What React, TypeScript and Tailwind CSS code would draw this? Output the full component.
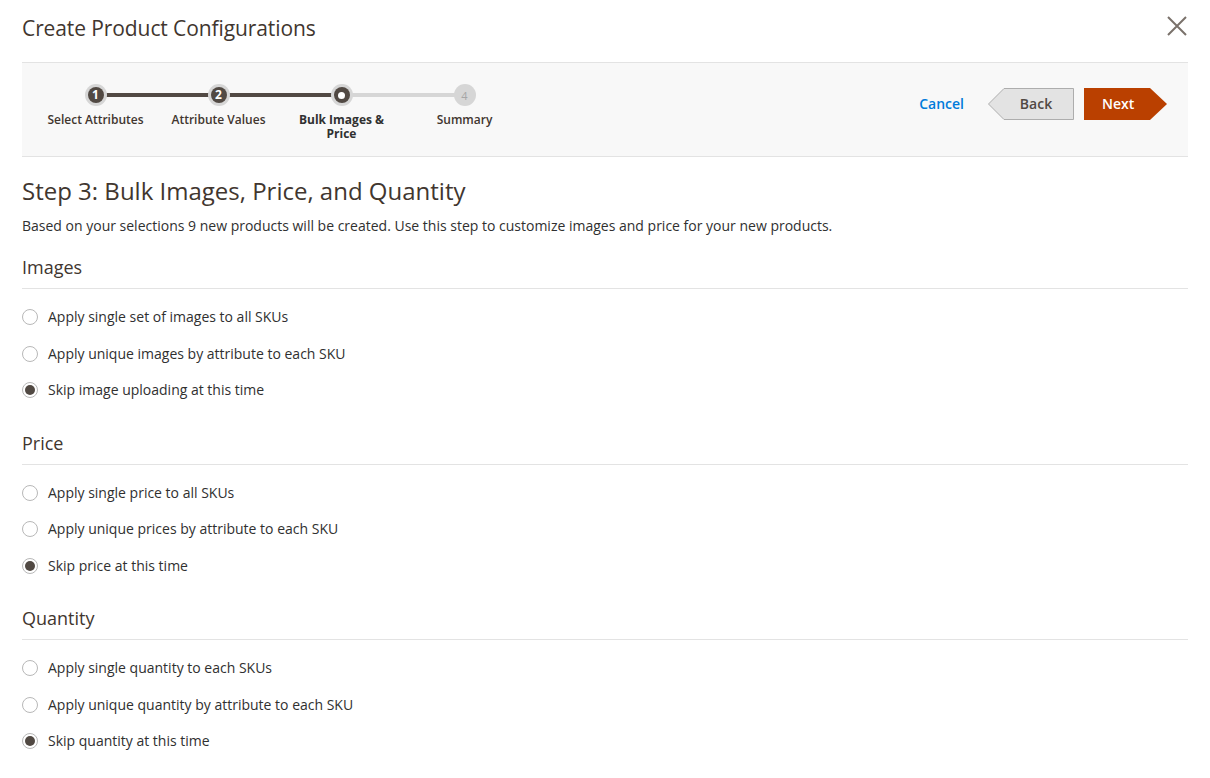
import React from "react";

type StepState = "done" | "active" | "todo";

function Step({ n, label, state, connector }: { n: number; label: string; state: StepState; connector?: "dark" | "light" }) {
  return (
    <div className="relative flex w-[123px] flex-col items-center">
      {connector && (
        <div
          className={`absolute left-1/2 top-[9px] h-[4px] w-[123px] ${connector === "dark" ? "bg-[#514943]" : "bg-[#d6d6d6]"}`}
        />
      )}
      <div className="relative z-10 flex h-[22px] w-[22px] items-center justify-center rounded-full bg-[#d6d6d6]">
        {state === "done" && (
          <div className="flex h-[16px] w-[16px] items-center justify-center rounded-full bg-[#514943] text-[12px] font-bold leading-none text-white">
            {n}
          </div>
        )}
        {state === "active" && (
          <div className="flex h-[16px] w-[16px] items-center justify-center rounded-full bg-[#514943]">
            <div className="h-[7px] w-[7px] rounded-full bg-white" />
          </div>
        )}
        {state === "todo" && <span className="text-[11px] leading-none text-[#a6a6a6]">{n}</span>}
      </div>
      <div
        className={`mt-[7px] w-[100px] text-center text-[12px] leading-[14px] ${
          state === "active" ? "font-bold text-[#303030]" : "font-semibold text-[#41362f]"
        }`}
      >
        {state === "active" ? (
          <>
            <div>Bulk Images &amp;</div>
            <div>Price</div>
          </>
        ) : (
          label
        )}
      </div>
    </div>
  );
}

function Radio({ label, checked }: { label: string; checked?: boolean }) {
  return (
    <div className="flex h-[36.5px] items-center">
      <span className="flex h-[16px] w-[16px] items-center justify-center rounded-full border border-[#b8b8b8] bg-white">
        {checked && <span className="h-[10px] w-[10px] rounded-full bg-[#514943]" />}
      </span>
      <span className="ml-[10px] text-[14px] leading-[20px] text-[#303030]">{label}</span>
    </div>
  );
}

function Section({ title, options }: { title: string; options: string[] }) {
  return (
    <div className="mb-[22px]">
      <div className="border-b border-[#e3e3e3] pb-[9px] text-[18px] leading-[24px] text-[#41362f]">{title}</div>
      <div className="mt-[10px]">
        {options.map((o, i) => (
          <Radio key={o} label={o} checked={i === options.length - 1} />
        ))}
      </div>
    </div>
  );
}

export default function App() {
  return (
    <div className="min-h-[778px] w-[1210px] bg-white px-[22px] font-['Open_Sans',sans-serif] text-[#303030]">
      <div className="flex h-[62px] items-start justify-between pt-[14px]">
        <h1 className="text-[21px] leading-[28px] tracking-[-0.1px] text-[#41362f]">Create Product Configurations</h1>
        <svg width="22" height="22" viewBox="0 0 22 22" className="mt-[1px]">
          <path d="M2 2 L20 20 M20 2 L2 20" stroke="#7a716b" strokeWidth="2" fill="none" />
        </svg>
      </div>

      <div className="flex h-[95px] justify-between border-y border-[#e3e3e3] bg-[#f8f8f8] pl-[12px] pr-[21px] pt-[21px]">
        <div className="flex">
          <Step n={1} label="Select Attributes" state="done" connector="dark" />
          <Step n={2} label="Attribute Values" state="done" connector="dark" />
          <Step n={3} label="Bulk Images & Price" state="active" connector="light" />
          <Step n={4} label="Summary" state="todo" />
        </div>
        <div className="mt-[4px] flex h-[32px] items-center">
          <span className="mr-[24px] text-[14px] font-semibold leading-[20px] text-[#007bdb]">Cancel</span>
          <div className="relative flex h-[32px] w-[86px] items-center justify-center">
            <svg width="86" height="32" viewBox="0 0 86 32" className="absolute left-0 top-0">
              <polygon points="0.5,16 16,0.5 85.5,0.5 85.5,31.5 16,31.5" fill="#e3e3e3" stroke="#adadad" strokeWidth="1" />
            </svg>
            <span className="relative ml-[10px] text-[14px] font-semibold leading-[20px] text-[#514943]">Back</span>
          </div>
          <div className="relative ml-[10px] flex h-[32px] w-[83px] items-center">
            <svg width="83" height="32" viewBox="0 0 83 32" className="absolute left-0 top-0">
              <polygon points="0,0 66,0 83,16 66,32 0,32" fill="#ba4000" />
            </svg>
            <span className="relative ml-[18px] text-[14px] font-semibold leading-[20px] text-white">Next</span>
          </div>
        </div>
      </div>

      <h2 className="mt-[19px] text-[24px] leading-[30px] text-[#41362f]">Step 3: Bulk Images, Price, and Quantity</h2>
      <p className="mt-[10px] text-[14px] leading-[20px] text-[#303030]">
        Based on your selections 9 new products will be created. Use this step to customize images and price for your new products.
      </p>
      <div className="mt-[19px]">
        <Section
          title="Images"
          options={[
            "Apply single set of images to all SKUs",
            "Apply unique images by attribute to each SKU",
            "Skip image uploading at this time",
          ]}
        />
        <Section
          title="Price"
          options={["Apply single price to all SKUs", "Apply unique prices by attribute to each SKU", "Skip price at this time"]}
        />
        <Section
          title="Quantity"
          options={[
            "Apply single quantity to each SKUs",
            "Apply unique quantity by attribute to each SKU",
            "Skip quantity at this time",
          ]}
        />
      </div>
    </div>
  );
}
